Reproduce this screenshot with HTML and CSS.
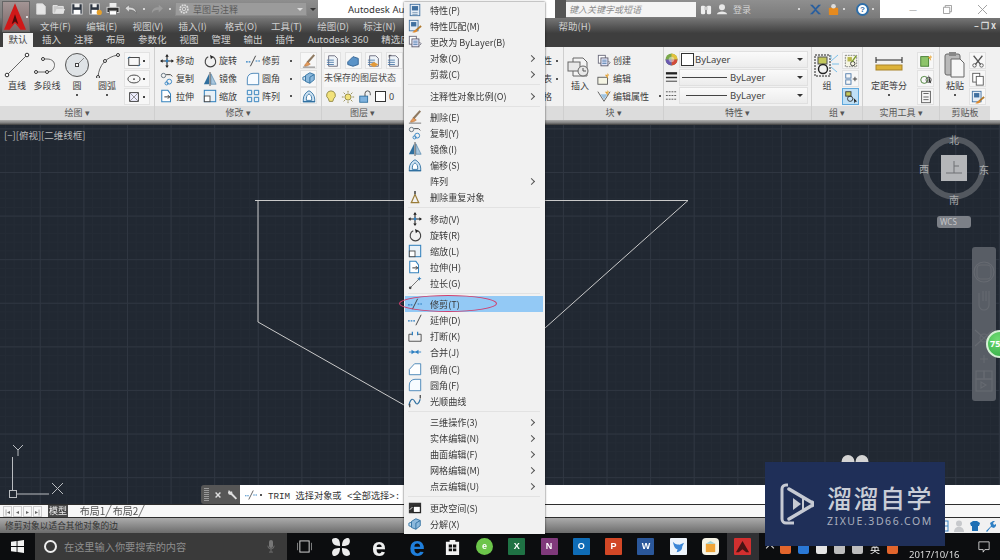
FILE: index.html
```html
<!DOCTYPE html>
<html lang="zh-CN">
<head>
<meta charset="utf-8">
<title>AutoCAD 修剪</title>
<link rel="stylesheet" href="styles.css">
</head>
<body>
<svg class="sprite" xmlns="http://www.w3.org/2000/svg">
  <symbol id="s-props" viewBox="0 0 16 16"><rect x="2.5" y="1.5" width="11" height="13" fill="#e4ecf5" stroke="#3f6f9f"/><rect x="4.5" y="3.5" width="7" height="5" fill="#3f6f9f"/><path d="M5 11h6M5 13h6" stroke="#7a97b5"/></symbol>
  <symbol id="s-match" viewBox="0 0 16 16"><rect x="1.5" y="1.5" width="10" height="12" fill="#e4ecf5" stroke="#3f6f9f"/><rect x="3.5" y="3.5" width="6" height="5" fill="#3f6f9f"/><path d="M15 8 9 13" stroke="#b0782c" stroke-width="2"/><path d="M7 13l3-1 1 2-3 1.5H5z" fill="#e08a2c"/></symbol>
  <symbol id="s-bylayer" viewBox="0 0 16 16"><rect x="1.5" y="1.5" width="8" height="9" fill="#fff" stroke="#667"/><rect x="4.5" y="4.5" width="8" height="9" fill="#eef" stroke="#556"/><path d="M6 7h5M6 9h5M6 11h5" stroke="#4a78a8"/><path d="M13 8l2 2-2 2" fill="none" stroke="#667"/></symbol>
  <symbol id="s-erase" viewBox="0 0 16 16"><path d="M14 1 6 10" stroke="#8f7a62" stroke-width="2.4"/><path d="M3 13c1-2 2-3 3.500-4l3 2.500C7 13.500 5 14 3 14z" fill="#e39a5a" stroke="#a8622a" stroke-width=".6"/><path d="M1 15h14" stroke="#6d6d6d"/></symbol>
  <symbol id="s-copy" viewBox="0 0 16 16"><circle cx="4" cy="4" r="2.500" fill="none" stroke="#5a6a78"/><path d="M7 3h5l2 2" fill="none" stroke="#333"/><circle cx="10.500" cy="11" r="2.800" fill="none" stroke="#2d7fc1"/><circle cx="7.500" cy="13" r="1.800" fill="none" stroke="#2d7fc1"/></symbol>
  <symbol id="s-mirror" viewBox="0 0 16 16"><path d="M7 2 1 14h6z" fill="#2f6f9e"/><path d="M9 2l6 12H9z" fill="#a9c6dd" stroke="#2f6f9e" stroke-width=".6"/><path d="M8 0v16" stroke="#444"/></symbol>
  <symbol id="s-offset" viewBox="0 0 16 16"><path d="M1.500 14.500v-3c0-4 3-8 6.500-9.500 3.500 1.500 6.500 5.500 6.500 9.500v3z" fill="#cfe3f3" stroke="#2d6e9f"/><path d="M5 13v-2.500C5 8 6.500 6.500 8 5.500c1.500 1 3 2.500 3 5V13z" fill="#fff" stroke="#2d6e9f"/><path d="M1 14.500h14" stroke="#2d6e9f" stroke-width="1.400"/></symbol>
  <symbol id="s-dedupe" viewBox="0 0 16 16"><path d="M8 1v4" stroke="#555" stroke-width="2"/><path d="M8 5 4 14M8 5l4 9M3 14.500h10" fill="none" stroke="#9a7c38" stroke-width="1.400"/></symbol>
  <symbol id="s-move" viewBox="0 0 16 16"><path d="M8 2v12M2 8h12" stroke="#222" stroke-width="1.200"/><path d="M8 0l2 3H6zM8 16l2-3H6zM0 8l3-2v4zM16 8l-3-2v4z" fill="#222"/><circle cx="8" cy="8" r="1.600" fill="#2d7fc1"/></symbol>
  <symbol id="s-rotate" viewBox="0 0 16 16"><path d="M6 3.200a6 6 0 1 0 5 0" fill="none" stroke="#444" stroke-width="1.300"/><path d="M8 1 12 3l-3 3z" fill="#222"/></symbol>
  <symbol id="s-scale" viewBox="0 0 16 16"><rect x="1.500" y="1.500" width="13" height="13" fill="#e8f1f8" stroke="#3582bd" stroke-width="1.200"/><rect x="1.500" y="8" width="6.500" height="6.500" fill="#fff" stroke="#444"/></symbol>
  <symbol id="s-stretch" viewBox="0 0 16 16"><path d="M2 1.500h7l3 4v9H2z" fill="#fff" stroke="#3582bd" stroke-width="1.200"/><path d="M5 9h6M9 7l2 2-2 2" fill="none" stroke="#222"/></symbol>
  <symbol id="s-lengthen" viewBox="0 0 16 16"><path d="M2 14 13 3" stroke="#666"/><circle cx="2.500" cy="13.500" r="1.500" fill="#444"/><path d="M13 1v4M11 3h4" stroke="#2d7fc1"/></symbol>
  <symbol id="s-trim" viewBox="0 0 16 16"><path d="M0 9h5M11 8h5" stroke="#2d7fc1" stroke-width="1.200" stroke-dasharray="2 1"/><path d="M5 14 11 2" stroke="#333"/></symbol>
  <symbol id="s-extend" viewBox="0 0 16 16"><path d="M0 9h9" stroke="#2d7fc1" stroke-width="1.200" stroke-dasharray="2 1"/><path d="M9 14 15 2" stroke="#333"/></symbol>
  <symbol id="s-break" viewBox="0 0 16 16"><path d="M1 6v8h14V6" fill="none" stroke="#444"/><path d="M1 6h4M11 6h4" stroke="#444"/><path d="M5 3v4M11 3v4" stroke="#2d7fc1" stroke-width="1.400"/></symbol>
  <symbol id="s-join" viewBox="0 0 16 16"><path d="M1 8h14" stroke="#2d7fc1"/><path d="M8 8 4 5.500v5zM8 8l4-2.500v5z" fill="#2d7fc1"/></symbol>
  <symbol id="s-chamfer" viewBox="0 0 16 16"><path d="M1.500 14.500v-6l6-6.500h7v12.500z" fill="#fff" stroke="#3f7fb3"/></symbol>
  <symbol id="s-fillet" viewBox="0 0 16 16"><path d="M1.500 14.500V8c0-4 3-6.500 6.500-6.500h6.500v13z" fill="#f7fbff" stroke="#3f7fb3"/></symbol>
  <symbol id="s-spline" viewBox="0 0 16 16"><path d="M1 13c2-9 5-8 7-4s4 3 6-3" fill="none" stroke="#2d6e9f" stroke-width="1.300"/><path d="M2 15v-4M14 1v4" stroke="#444" stroke-width="1.400"/></symbol>
  <symbol id="s-space" viewBox="0 0 16 16"><rect x="1" y="2" width="14" height="12" fill="#333"/><rect x="6" y="6" width="8" height="7" fill="#fff" stroke="#111"/><path d="M2 10l3-3" stroke="#fff"/></symbol>
  <symbol id="s-explode" viewBox="0 0 16 16"><path d="M4 5l5-3 5 2v6l-5 4-5-2z" fill="#8bb8dc" stroke="#2d6e9f"/><path d="M1 7l3-1v5L1 10zM9 7l5-3M9 7v7" stroke="#2d6e9f" fill="#cfe3f3"/></symbol>
  <symbol id="s-layer" viewBox="0 0 16 16"><path d="M3 2h7l3 3v9H3z" fill="#eef3f8" stroke="#667"/><path d="M1 7h8M1 9.500h8M1 12h8" stroke="#4a78a8"/></symbol>
  <symbol id="s-group" viewBox="0 0 16 16"><rect x="1.500" y="1.500" width="13" height="13" fill="#f5f5e4" stroke="#777" stroke-dasharray="2 1"/><rect x="4" y="3.500" width="5" height="5" fill="#b9b84e"/><circle cx="10" cy="11" r="2.500" fill="none" stroke="#333"/></symbol>
</svg>

<div class="app">
  <header class="qat">
    <div class="qat-tools">
      <svg class="qi" viewBox="0 0 16 14"><path d="M3 1h7l3 3v9H3z" fill="#e6e6e6" stroke="#ddd"/></svg>
      <svg class="qi" viewBox="0 0 16 14"><path d="M1 3h5l1 1h6v8H1z" fill="#c9c9c9" stroke="#eee"/><path d="M3 12l2-5h10l-2 5z" fill="#e2e2e2"/></svg>
      <svg class="qi" viewBox="0 0 16 14"><rect x="2" y="1" width="12" height="12" fill="#2c3440" stroke="#ddd"/><rect x="5" y="1" width="6" height="4" fill="#eee"/><rect x="4" y="8" width="8" height="5" fill="#fff"/></svg>
      <svg class="qi" viewBox="0 0 16 14"><rect x="2" y="1" width="11" height="12" fill="#2c3440" stroke="#ddd"/><rect x="5" y="1" width="5" height="4" fill="#eee"/><rect x="4" y="8" width="7" height="5" fill="#fff"/><circle cx="13" cy="11" r="3" fill="#e6a12c"/></svg>
      <svg class="qi" viewBox="0 0 16 14"><rect x="4" y="0" width="8" height="5" fill="#eee"/><rect x="1" y="5" width="14" height="6" fill="#333" stroke="#ddd"/><rect x="4" y="9" width="8" height="5" fill="#fff" stroke="#777"/></svg>
      <svg class="qi" viewBox="0 0 16 14"><path d="M1 6l5-4v3c5 0 8 2 8 7-2-3-4-4-8-4v3z" fill="#d8d8d8" stroke="#555" stroke-width=".5"/></svg>
      <span class="qdot"></span>
      <svg class="qi dim" viewBox="0 0 16 14"><path d="M15 6l-5-4v3C5 5 2 7 2 12c2-3 4-4 8-4v3z" fill="#a5a5a5"/></svg>
      <span class="qdot"></span>
    </div>
    <div class="workspace">
      <svg class="gear" viewBox="0 0 14 14"><circle cx="7" cy="7" r="4.500" fill="none" stroke="#ddd" stroke-width="2" stroke-dasharray="2 1"/><circle cx="7" cy="7" r="2" fill="none" stroke="#ddd"/></svg>
      <span class="ws-name">草图与注释</span>
      <span class="tri"></span>
    </div>
    <span class="ws-more"><span class="tri dark"></span></span>
    <div class="title-white"><span>Autodesk Aut</span></div>
    <div class="search-area">
      <span class="search-arrow"></span>
      <span class="search-input">键入关键字或短语</span>
      <span class="binoc">
        <svg viewBox="0 0 14 13"><rect x="1" y="2" width="5" height="10" rx="1.500" fill="#eee"/><rect x="8" y="2" width="5" height="10" rx="1.500" fill="#eee"/><rect x="5" y="3" width="4" height="4" fill="#ccc"/></svg>
      </span>
      <svg class="user" viewBox="0 0 14 14"><circle cx="7" cy="5" r="3.500" fill="#e8e8e8"/><path d="M1 13c1-4 11-4 12 0z" fill="#e8e8e8"/></svg>
      <span class="login">登录</span>
      <span class="qdot push"></span>
      <svg class="xi" viewBox="0 0 14 14"><path d="M1 2l5 5-5 5h3l3-3.500L10 12h3L8 7l5-5h-3L7 5.500 4 2z" fill="#2a5f9e"/></svg>
      <svg class="xi" viewBox="0 0 14 14"><rect x="2" y="5" width="10" height="8" rx="1" fill="#e58a1f"/><circle cx="7" cy="3.500" r="2.500" fill="#ddd"/></svg>
      <span class="qdot"></span>
      <span class="help">?</span>
      <span class="qdot"></span>
    </div>
    <div class="winctl">
      <span class="wc">—</span>
      <svg class="wc-i" viewBox="0 0 10 10"><path d="M.5 2.500h7v7h-7zM2.500 2.500v-2h7v7h-2" fill="none" stroke="#999"/></svg>
      <svg class="wc-i" viewBox="0 0 10 10"><path d="M0 0l10 10M10 0 0 10" stroke="#999"/></svg>
    </div>
  </header>

  <nav class="menubar">
    <span class="mi">文件(F)</span><span class="mi">编辑(E)</span><span class="mi">视图(V)</span><span class="mi">插入(I)</span><span class="mi">格式(O)</span><span class="mi">工具(T)</span><span class="mi">绘图(D)</span><span class="mi">标注(N)</span>
    <span class="mi mi-help">帮助(H)</span>
    <span class="doc-ctl">– ❐ x</span>
  </nav>

  <nav class="tabs">
    <span class="tab active">默认</span><span class="tab">插入</span><span class="tab">注释</span><span class="tab">布局</span><span class="tab">参数化</span><span class="tab">视图</span><span class="tab">管理</span><span class="tab">输出</span><span class="tab">插件</span><span class="tab latin">Autodesk 360</span><span class="tab">精选应</span>
  </nav>

  <section class="ribbon">
    <div class="panel p-draw">
      <div class="body">
        <div class="large w30"><svg class="big" viewBox="0 0 26 26"><path d="M3 23 23 3" stroke="#666"/><circle cx="3" cy="23" r="1.800" fill="#fff" stroke="#333"/><circle cx="23" cy="3" r="1.800" fill="#fff" stroke="#333"/></svg><span>直线</span></div>
        <div class="large w30"><svg class="big" viewBox="0 0 26 26"><path d="M2 20h11c9 0 11-13 0-13H9" fill="none" stroke="#666"/><circle cx="2" cy="20" r="1.500" fill="#fff" stroke="#333"/><circle cx="13" cy="20" r="1.500" fill="#fff" stroke="#333"/><circle cx="9" cy="7" r="1.500" fill="#fff" stroke="#333"/></svg><span>多段线</span></div>
        <div class="large w30"><svg class="big" viewBox="0 0 26 26"><circle cx="13" cy="13" r="11.500" fill="#dfe3e6" stroke="#555"/><path d="M13 13 20 6" stroke="#888"/><rect x="11.500" y="11.500" width="3" height="3" fill="#fff" stroke="#444"/></svg><span>圆</span><i class="down"></i></div>
        <div class="large w30"><svg class="big" viewBox="0 0 26 26"><path d="M4 25C5 13 12 5 24 3" fill="none" stroke="#666"/><circle cx="4" cy="25" r="1.500" fill="#fff" stroke="#333"/><circle cx="11" cy="9" r="1.500" fill="#fff" stroke="#333"/><circle cx="24" cy="3" r="1.500" fill="#fff" stroke="#333"/></svg><span>圆弧</span><i class="down"></i></div>
        <div class="stack drop">
          <span class="sq"><svg viewBox="0 0 16 16"><rect x="2" y="4" width="12" height="9" fill="none" stroke="#333"/><path d="M1 5l2-2M13 14l2-2" stroke="#2d7fc1"/></svg><i></i></span>
          <span class="sq"><svg viewBox="0 0 16 16"><ellipse cx="8" cy="8" rx="7" ry="4.500" fill="none" stroke="#333"/><circle cx="8" cy="8" r="1" fill="#333"/></svg><i></i></span>
          <span class="sq"><svg viewBox="0 0 16 16"><rect x="3" y="3" width="10" height="10" fill="#eef" stroke="#333"/><path d="M3 3l10 10M13 3 3 13" stroke="#888"/></svg><i></i></span>
        </div>
      </div>
      <div class="ptitle">绘图 ▾</div>
    </div>

    <div class="panel p-modify">
      <div class="body modify-grid">
        <div class="tool"><svg class="ic"><use href="#s-move"/></svg>移动</div>
        <div class="tool"><svg class="ic"><use href="#s-rotate"/></svg>旋转</div>
        <div class="tool"><svg class="ic"><use href="#s-trim"/></svg>修剪<i class="dot"></i></div>
        <span class="sq plain"><svg viewBox="0 0 16 16"><use href="#s-erase"/></svg></span>
        <div class="tool"><svg class="ic"><use href="#s-copy"/></svg>复制</div>
        <div class="tool"><svg class="ic"><use href="#s-mirror"/></svg>镜像</div>
        <div class="tool"><svg class="ic"><use href="#s-fillet"/></svg>圆角<i class="dot"></i></div>
        <span class="sq plain"><svg viewBox="0 0 16 16"><use href="#s-explode"/></svg></span>
        <div class="tool"><svg class="ic"><use href="#s-stretch"/></svg>拉伸</div>
        <div class="tool"><svg class="ic"><use href="#s-scale"/></svg>缩放</div>
        <div class="tool"><svg class="ic" viewBox="0 0 16 16"><path d="M1.500 1.500h5v5h-5zM9.500 1.500h5v5h-5zM1.500 9.500h5v5h-5zM9.500 9.500h5v5h-5z" fill="#e8f1f8" stroke="#3582bd" stroke-width="1.100"/></svg>阵列<i class="dot"></i></div>
        <span class="sq plain"><svg viewBox="0 0 16 16"><use href="#s-offset"/></svg></span>
      </div>
      <div class="ptitle">修改 ▾</div>
    </div>

    <div class="panel p-layer">
      <div class="body layer-body">
        <div class="icon-row">
          <span class="sq plain"><svg viewBox="0 0 16 16"><use href="#s-layer"/></svg></span>
          <span class="sq plain"><svg viewBox="0 0 16 16"><path d="M2 9l6-6 6 2v7l-6 2-6-2z" fill="#5b93c7" stroke="#2d5e8f"/></svg></span>
          <span class="sq plain"><svg viewBox="0 0 16 16"><use href="#s-layer"/><path d="M8 9l5 3-5 3-5-3z" fill="#e39a3a"/></svg></span>
          <span class="sq plain"><svg viewBox="0 0 16 16"><path d="M2 1h3v3H2z" fill="#333"/><use href="#s-layer"/></svg></span>
        </div>
        <div class="layer-state">未保存的图层状态</div>
        <div class="icon-row tight">
          <svg class="ic" viewBox="0 0 16 16"><path d="M8 1a5 5 0 0 1 3 9l-1 3H6l-1-3a5 5 0 0 1 3-9z" fill="#f2e27a" stroke="#8c8240"/></svg>
          <svg class="ic" viewBox="0 0 16 16"><circle cx="8" cy="8" r="3.500" fill="#f2e27a" stroke="#8c8240"/><path d="M8 1v2M8 13v2M1 8h2M13 8h2M3 3l1.500 1.500M13 3l-1.500 1.500M3 13l1.500-1.500M13 13l-1.500-1.500" stroke="#8c8240"/></svg>
          <svg class="ic" viewBox="0 0 16 16"><rect x="2" y="7" width="9" height="7" fill="#7fb2de" stroke="#2d6e9f"/><path d="M8 7V4a3 3 0 0 1 6 0v2" fill="none" stroke="#444"/></svg>
          <span class="swatch"></span><span class="zero">0</span>
        </div>
      </div>
      <div class="ptitle">图层 ▾</div>
    </div>

    <div class="panel p-annot">
      <div class="body annot-body">
        <div class="annot-row">性<i class="dot"></i></div>
        <div class="annot-row">表<i class="dot"></i></div>
        <div class="annot-row">格<i class="dot blank"></i></div>
      </div>
      <div class="ptitle"></div>
    </div>

    <div class="panel p-block">
      <div class="body">
        <div class="large w30"><svg class="big" viewBox="0 0 26 26"><path d="M6 6h10l4 4v14H6z" fill="#f4f4f4" stroke="#666"/><rect x="1" y="10" width="12" height="9" fill="#e8e8e8" stroke="#666"/><circle cx="16" cy="19" r="5" fill="#e8e8e8" stroke="#666"/><path d="M16 16v3h3" fill="none" stroke="#555"/></svg><span>插入</span></div>
        <div class="col">
          <div class="tool"><svg class="ic"><use href="#s-bylayer"/></svg>创建</div>
          <div class="tool"><svg class="ic" viewBox="0 0 16 16"><rect x="1" y="6" width="11" height="8" fill="#f4f4e4" stroke="#555"/><path d="M12 1l2 3h-2l1 4-4-5h3z" fill="#e6a12c"/></svg>编辑</div>
          <div class="tool"><svg class="ic" viewBox="0 0 16 16"><path d="M1 3l7 11 7-11" fill="none" stroke="#555"/><path d="M4 6h8L8 12z" fill="#9cc2e0"/><path d="M12 1l2 3h-2l1 4-4-5h3z" fill="#e6a12c"/></svg>编辑属性<i class="dot"></i></div>
        </div>
      </div>
      <div class="ptitle">块 ▾</div>
    </div>

    <div class="panel p-prop">
      <div class="body prop-body">
        <div class="prop-row">
          <svg class="ic wheel" viewBox="0 0 14 14"><circle cx="7" cy="7" r="6.500" fill="#7aa84a"/><path d="M7 7V.5A6.500 6.500 0 0 1 13.500 7z" fill="#e2c23c"/><path d="M7 7h6.500A6.500 6.500 0 0 1 7 13.500z" fill="#d24a3a"/><path d="M7 7v6.500A6.500 6.500 0 0 1 .5 7z" fill="#6a5ab0"/><circle cx="7" cy="7" r="3" fill="#e9e9e9" opacity=".5"/></svg>
          <div class="combo"><span class="swatch"></span><span class="c-name">ByLayer</span><span class="tri dark"></span></div>
        </div>
        <div class="prop-row">
          <svg class="ic" viewBox="0 0 14 14"><path d="M1 2.500h12" stroke="#222" stroke-width="2.500"/><path d="M1 7h12" stroke="#222" stroke-width="1.600"/><path d="M1 11h12" stroke="#333"/></svg>
          <div class="combo lined"><span class="c-line"></span><span class="c-name">ByLayer</span><span class="tri dark"></span></div>
        </div>
        <div class="prop-row">
          <svg class="ic" viewBox="0 0 14 14"><path d="M1 3h12M1 7h12M1 11h12" stroke="#555" stroke-dasharray="2 1"/></svg>
          <div class="combo lined inset"><span class="c-line"></span><span class="c-name">ByLayer</span><span class="tri dark"></span></div>
        </div>
      </div>
      <div class="ptitle">特性 ▾</div>
    </div>

    <div class="panel p-group">
      <div class="body">
        <div class="large w30"><svg class="big" viewBox="0 0 26 26"><rect x="1" y="3" width="15" height="21" fill="none" stroke="#222" stroke-dasharray="2 1"/><rect x="4" y="5" width="9" height="7" fill="#c4c85c" stroke="#555"/><circle cx="9" cy="17" r="4.500" fill="none" stroke="#222" stroke-width="1.400"/><path d="M17 9l7-6M18 12h7M17 15l6 5M17 3v4" stroke="#7ac0ea"/></svg><span>组</span></div>
        <div class="stack">
          <span class="sq plain"><svg viewBox="0 0 16 16"><use href="#s-group"/><path d="M9 9l5-7" stroke="#7a9a2c" stroke-width="1.500"/></svg></span>
          <span class="sq plain"><svg viewBox="0 0 16 16"><rect x="2" y="2" width="6" height="5" fill="none" stroke="#4a78a8"/><rect x="2" y="9" width="6" height="5" fill="none" stroke="#4a78a8"/><path d="M10 8h5M12.500 5.500v5" stroke="#333"/></svg></span>
          <span class="sq active"><svg viewBox="0 0 16 16"><rect x="2" y="2" width="6" height="5" fill="#c4c85c" stroke="#333"/><circle cx="7" cy="10" r="3" fill="none" stroke="#333"/><path d="M11 9l4 4-2 .5-1 2z" fill="#222"/></svg></span>
        </div>
      </div>
      <div class="ptitle">组 ▾</div>
    </div>

    <div class="panel p-util">
      <div class="body">
        <div class="large w52"><svg class="big wide" viewBox="0 0 30 26"><path d="M2 8h26" stroke="#222"/><path d="M2 5v6M28 5v6" stroke="#222"/><rect x="2" y="13" width="26" height="5" fill="#dcb23a" stroke="#a9832a"/></svg><span>定距等分</span><i class="down"></i></div>
        <div class="stack">
          <span class="sq plain"><svg viewBox="0 0 16 16"><rect x="2" y="3" width="9" height="11" fill="#8dc46a" stroke="#3f7a2c"/><path d="M13 1l2 3h-2l1 4-4-5h3z" fill="#e6a12c"/></svg></span>
          <span class="sq plain"><svg viewBox="0 0 16 16"><circle cx="6" cy="9" r="4" fill="none" stroke="#3f7a2c"/><circle cx="11" cy="9" r="3" fill="none" stroke="#555"/><path d="M11 3l3 10-3-2z" fill="#333"/></svg></span>
          <span class="sq plain"><svg viewBox="0 0 16 16"><rect x="3" y="1.500" width="10" height="13" fill="#f6f6f6" stroke="#555"/><path d="M5 4h6M5 8h6M5 11h6" stroke="#555"/></svg></span>
        </div>
      </div>
      <div class="ptitle">实用工具 ▾</div>
    </div>

    <div class="panel p-clip">
      <div class="body">
        <div class="large w30"><svg class="big" viewBox="0 0 26 26"><rect x="3" y="2" width="15" height="21" rx="2" fill="#b9b9b9" stroke="#666"/><rect x="7" y="0" width="7" height="4" fill="#888"/><path d="M9 7h9l4 4v14H9z" fill="#f6f6f6" stroke="#666"/></svg><span>粘贴</span><i class="down"></i></div>
        <div class="stack">
          <span class="sq plain"><svg viewBox="0 0 16 16"><path d="M3 2l8 10M13 2 5 12" stroke="#555" stroke-width="1.400"/><circle cx="4" cy="13" r="2" fill="none" stroke="#555"/><circle cx="12" cy="13" r="2" fill="none" stroke="#555"/></svg></span>
          <span class="sq plain"><svg viewBox="0 0 16 16"><rect x="2" y="1.500" width="8" height="10" fill="#fff" stroke="#555"/><rect x="6" y="5" width="8" height="10" fill="#fff" stroke="#555"/></svg></span>
          <span class="sq plain"><svg viewBox="0 0 16 16"><use href="#s-match"/></svg></span>
        </div>
      </div>
      <div class="ptitle">剪贴板</div>
    </div>
  </section>
  <div class="ribbon-edge"></div>

  <main class="canvas">
    <div class="grid"></div>
    <span class="view-label">[−][俯视][二维线框]</span>

    <svg class="drawing" viewBox="0 125 1000 379" xmlns="http://www.w3.org/2000/svg">
      <g fill="none" stroke="#c9c9c9" stroke-width="1">
        <path d="M255 200.500H688L545 328"/>
        <path d="M258 200.500V322L404 405"/>
      </g>
      <g fill="none" stroke="#b9bcc0" stroke-width="1">
        <path d="M12.500 457V491M17 494H49"/>
        <rect x="9.500" y="490.500" width="7" height="7"/>
        <path d="M13 445l5 5M23 445l-5 5v6M52 483l11 11M63 483 52 494"/>
      </g>
      <ellipse cx="848" cy="462" rx="6.500" ry="7" fill="#d4d4d4"/>
      <ellipse cx="862" cy="462" rx="6.500" ry="7" fill="#d4d4d4"/>
      <circle cx="954" cy="168" r="28.500" fill="none" stroke="#53585f" stroke-width="6"/>
      <rect x="941" y="155" width="26" height="26" fill="#b4b6b9"/>
      <path d="M946 173h16M954 161v12M954 166h5" stroke="#6f7174" fill="none"/>
    </svg>
    <div class="compass north">北</div>
    <div class="compass south">南</div>
    <div class="compass west">西</div>
    <div class="compass east">东</div>
    <div class="wcs">WCS</div>

    <div class="navbar">
      <svg viewBox="0 0 24 154" xmlns="http://www.w3.org/2000/svg">
        <g fill="none" stroke="#666a71" stroke-width="1.100">
          <rect x="5" y="18" width="14" height="14" rx="4"/>
          <circle cx="12" cy="25" r="10"/>
          <path d="M7 46v12a5 5 0 0 0 10 0V44M11 44v10M14 44v10M3 83l18 16M21 83 3 99"/>
          <circle cx="12" cy="91" r="4"/>
          <path d="M8 112h8M12 108v8"/>
          <rect x="4" y="124" width="8" height="8"/>
          <rect x="12" y="124" width="8" height="8"/>
          <rect x="4" y="132" width="16" height="12"/>
          <path d="M9 135l5 3-5 3z"/>
        </g>
      </svg>
    </div>
    <div class="badge">75</div>

    <div class="cmdbar">
      <div class="cmd-handle">
        <span class="grip"></span>
        <svg class="cmd-i" viewBox="0 0 10 10"><path d="M2 2l6 6M8 2 2 8" stroke="#ddd" stroke-width="1.800"/></svg>
        <svg class="cmd-i wrench" viewBox="0 0 12 12"><path d="M2 1l2 2 1.500-.5L6 5l5 5-1.500 1.500-5-5L2 6 1 4z" fill="#ddd"/></svg>
      </div>
      <div class="cmd-text"><svg class="cmd-trim"><use href="#s-trim"/></svg><i class="dot"></i><span>TRIM 选择对象或 &lt;全部选择&gt;:</span></div>
    </div>
  </main>

  <div class="rule"></div>
  <div class="layouts">
    <span class="nav-btns"><i>|◂</i><i>◂</i><i>▸</i><i>▸|</i></span>
    <span class="ltab cur">模型</span><span class="ltab">布局1</span><span class="ltab">布局2</span>
  </div>
  <div class="rule"></div>
  <div class="status">
    <span class="status-text">修剪对象以适合其他对象的边</span>
    <div class="status-tray">
      <svg viewBox="0 0 12 12"><rect x="1" y="1" width="10" height="10" fill="none" stroke="#3c86c6"/><path d="M6 1v10M1 6h10" stroke="#3c86c6"/></svg>
      <svg viewBox="0 0 12 12"><circle cx="6" cy="3.500" r="3" fill="#c7c9cc"/><path d="M1 12c0-7 10-7 10 0z" fill="#c7c9cc"/></svg>
      <svg viewBox="0 0 12 12"><path d="M1 3l3-2h4l3 2-1 3H9v5H3V6H2z" fill="#1f70b4"/></svg>
      <svg viewBox="0 0 12 12"><path d="M1 11l5-5-1-3 3-2 2 0-2 2 1 2 2-1 0 2-2 2-3-1-4 5z" fill="#2f80c4"/></svg>
    </div>
  </div>

  <footer class="taskbar">
    <div class="start"><svg viewBox="0 0 14 14"><path d="M0 2l6-1v5.500H0zM7 1l7-1v6.500H7zM0 7.500h6V13l-6-1zM7 7.500h7V14l-7-1z" fill="#f2f2f2"/></svg></div>
    <div class="tb-search">
      <span class="cortana"></span>
      <span class="tb-text">在这里输入你要搜索的内容</span>
      <svg class="mic" viewBox="0 0 10 16"><rect x="2.500" y="0" width="5" height="10" rx="2.500" fill="#777"/><path d="M1 7a4 4 0 0 0 8 0M5 11v4M2.500 15h5" fill="none" stroke="#777"/></svg>
    </div>
    <div class="slot s34"><svg class="t16" viewBox="0 0 16 14"><rect x="3" y="1" width="10" height="12" fill="none" stroke="#ddd"/><path d="M0 3v8M16 3v8" stroke="#ddd"/></svg></div>
    <div class="slot s39"><svg class="t20" viewBox="0 0 20 20"><g fill="#ececec"><path d="M9 9C3 9 1 6 1 3c0-2 5-3 7 0 1 2 1 4 1 6zM11 9c0-6 3-8 6-8 2 0 3 5 0 7-2 1-4 1-6 1zM11 11c6 0 8 3 8 6 0 2-5 3-7 0-1-2-1-4-1-6zM9 11c0 6-3 8-6 8-2 0-3-5 0-7 2-1 4-1 6-1z"/></g></svg></div>
    <div class="slot s38"><span class="eie">e</span></div>
    <div class="slot s38"><span class="eedge">e</span></div>
    <div class="slot"><svg class="t18" viewBox="0 0 16 18"><path d="M5 4V2h6v2h4v14H1V4z" fill="#f2f2f2"/><path d="M4 7h3.500v3H4zM8.500 7H12v3H8.500zM4 11h3.500v3H4zM8.500 11H12v3H8.500z" fill="#111"/></svg></div>
    <div class="slot"><span class="app-i green">e</span></div>
    <div class="slot"><span class="app-i excel">X</span></div>
    <div class="slot"><span class="app-i one">N</span></div>
    <div class="slot"><span class="app-i outlook">O</span></div>
    <div class="slot"><span class="app-i ppt">P</span></div>
    <div class="slot"><span class="app-i word">W</span></div>
    <div class="slot"><span class="app-i bird"><svg viewBox="0 0 16 16"><path d="M2 3c3 3 5 3 7 3l5-2-2 4c0 4-3 6-6 6l1-3c-3 0-4-4-5-8z" fill="#3c86d6"/></svg></span></div>
    <div class="slot"><span class="app-i box"><svg viewBox="0 0 16 16"><rect x="3" y="5" width="10" height="9" fill="#f0a437"/><path d="M3 5l5-3 5 3z" fill="#9cd2d8"/></svg></span></div>
    <div class="slot current"><span class="app-i acad"><svg viewBox="0 0 16 16"><path d="M8 2 1 14h3l4-3 4 3h3z" fill="#491414"/></svg></span></div>
    <div class="tray">
      <span class="caret"></span>
      <i class="t-dot orange"></i><i class="t-dot blue"></i><i class="t-dot white"></i><i class="t-dot grey"></i><i class="t-dot grey"></i>
      <span class="ying">英</span>
      <i class="t-dot orange big-dot"></i>
      <span class="clock">2017/10/16</span>
      <svg class="notif" viewBox="0 0 14 14"><path d="M1 1h12v9H8l-2 3v-3H1z" fill="none" stroke="#ddd"/></svg>
    </div>
  </footer>

  <div class="ctxmenu">
    <div class="ci"><svg class="ci-i"><use href="#s-props"/></svg><span>特性(P)</span></div>
    <div class="ci"><svg class="ci-i"><use href="#s-match"/></svg><span>特性匹配(M)</span></div>
    <div class="ci"><svg class="ci-i"><use href="#s-bylayer"/></svg><span>更改为 ByLayer(B)</span></div>
    <div class="ci sub"><span class="ci-i"></span><span>对象(O)</span></div>
    <div class="ci sub"><span class="ci-i"></span><span>剪裁(C)</span></div>
    <div class="sep"></div>
    <div class="ci sub"><span class="ci-i"></span><span>注释性对象比例(O)</span></div>
    <div class="sep"></div>
    <div class="ci"><svg class="ci-i"><use href="#s-erase"/></svg><span>删除(E)</span></div>
    <div class="ci"><svg class="ci-i"><use href="#s-copy"/></svg><span>复制(Y)</span></div>
    <div class="ci"><svg class="ci-i"><use href="#s-mirror"/></svg><span>镜像(I)</span></div>
    <div class="ci"><svg class="ci-i"><use href="#s-offset"/></svg><span>偏移(S)</span></div>
    <div class="ci sub"><span class="ci-i"></span><span>阵列</span></div>
    <div class="ci"><svg class="ci-i"><use href="#s-dedupe"/></svg><span>删除重复对象</span></div>
    <div class="sep"></div>
    <div class="ci"><svg class="ci-i"><use href="#s-move"/></svg><span>移动(V)</span></div>
    <div class="ci"><svg class="ci-i"><use href="#s-rotate"/></svg><span>旋转(R)</span></div>
    <div class="ci"><svg class="ci-i"><use href="#s-scale"/></svg><span>缩放(L)</span></div>
    <div class="ci"><svg class="ci-i"><use href="#s-stretch"/></svg><span>拉伸(H)</span></div>
    <div class="ci"><svg class="ci-i"><use href="#s-lengthen"/></svg><span>拉长(G)</span></div>
    <div class="sep"></div>
    <div class="ci hot"><svg class="ci-i"><use href="#s-trim"/></svg><span>修剪(T)</span></div>
    <div class="ci"><svg class="ci-i"><use href="#s-extend"/></svg><span>延伸(D)</span></div>
    <div class="ci"><svg class="ci-i"><use href="#s-break"/></svg><span>打断(K)</span></div>
    <div class="ci"><svg class="ci-i"><use href="#s-join"/></svg><span>合并(J)</span></div>
    <div class="ci"><svg class="ci-i"><use href="#s-chamfer"/></svg><span>倒角(C)</span></div>
    <div class="ci"><svg class="ci-i"><use href="#s-fillet"/></svg><span>圆角(F)</span></div>
    <div class="ci"><svg class="ci-i"><use href="#s-spline"/></svg><span>光顺曲线</span></div>
    <div class="sep"></div>
    <div class="ci sub"><span class="ci-i"></span><span>三维操作(3)</span></div>
    <div class="ci sub"><span class="ci-i"></span><span>实体编辑(N)</span></div>
    <div class="ci sub"><span class="ci-i"></span><span>曲面编辑(F)</span></div>
    <div class="ci sub"><span class="ci-i"></span><span>网格编辑(M)</span></div>
    <div class="ci sub"><span class="ci-i"></span><span>点云编辑(U)</span></div>
    <div class="sep"></div>
    <div class="ci"><svg class="ci-i"><use href="#s-space"/></svg><span>更改空间(S)</span></div>
    <div class="ci"><svg class="ci-i"><use href="#s-explode"/></svg><span>分解(X)</span></div>
  </div>
  <div class="ring"></div>

  <div class="appbtn"><svg viewBox="0 0 20 24"><path d="M10 0 0 24h5l5-6 5 6h5z" fill="#d01818"/><path d="M10 10 7 19l3-2.500L13 19z" fill="#4a0c0c"/></svg><i></i></div>

  <aside class="watermark">
    <svg class="wm-logo" viewBox="0 0 34 44" xmlns="http://www.w3.org/2000/svg">
      <path d="M8 3H6a4 4 0 0 0-4 4v30a4 4 0 0 0 4 4h8" fill="none" stroke="#c6cad3" stroke-width="3"/>
      <path d="M9 7 31 20a2 2 0 0 1 0 4L9 37" fill="none" stroke="#c6cad3" stroke-width="3.500" stroke-linecap="round"/>
      <path d="M13 16l8 6-8 6z" fill="#c6cad3"/>
      <path d="M23 16v12" stroke="#c6cad3" stroke-width="2"/>
    </svg>
    <div class="wm-text">
      <div class="wm-cn">溜溜自学</div>
      <div class="wm-en">ZIXUE.3D66.COM</div>
    </div>
  </aside>
</div>
</body>
</html>
```

FILE: styles.css
```css
* { box-sizing: border-box; }
html, body { margin: 0; padding: 0; background: #222; }
body { width: 1000px; height: 560px; overflow: hidden; font-family: "Noto Sans", "Noto Sans CJK SC", sans-serif; }
.sprite { display: none; }
i { font-style: normal; }

.app { position: relative; width: 1000px; height: 560px; display: flex; flex-direction: column; overflow: hidden; font-family: "Noto Sans CJK SC", "Noto Sans", sans-serif; font-size: 9px; color: #3c3c3c; filter: blur(.45px); }

/* quick access bar */
.qat { height: 18px; display: flex; align-items: center; background: linear-gradient(#8e8e8e, #7b7b7b); flex: none; }
.qat-tools { width: 175px; padding-left: 34px; display: flex; align-items: center; gap: 4px; flex: none; }
.qi { width: 14px; height: 12px; flex: none; }
.qi.dim { opacity: .7; }
.qdot { width: 2px; height: 2px; background: #d5d5d5; flex: none; margin: 0 3px; }
.qat-tools .qdot { margin: 0 1px; }
.workspace { width: 132px; height: 14px; background: #9b9b9b; border: 1px solid #8a8a8a; display: flex; align-items: center; gap: 3px; padding: 0 3px 0 2px; flex: none; }
.gear { width: 12px; height: 12px; }
.ws-name { color: #5c5c5c; flex: 1; }
.tri { width: 0; height: 0; border-left: 3px solid transparent; border-right: 3px solid transparent; border-top: 3px solid #ddd; flex: none; }
.tri.dark { border-top-color: #333; }
.ws-more { width: 11px; height: 14px; display: flex; align-items: center; justify-content: center; flex: none; }
.title-white { width: 237px; height: 18px; background: #fff; padding-left: 30px; display: flex; align-items: center; font-family: "Noto Sans", sans-serif; font-size: 9.500px; color: #333; flex: none; white-space: nowrap; overflow: hidden; }
.search-area { width: 325px; height: 18px; display: flex; align-items: center; background: linear-gradient(#8f8f8f, #7a7a7a); flex: none; padding-right: 3px; }
.search-arrow { width: 11px; height: 18px; background: #555; flex: none; }
.search-input { width: 130px; height: 15px; background: #f4f4f4; color: #8a8a8a; font-style: italic; padding-left: 3px; line-height: 15px; flex: none; }
.binoc { margin-left: 4px; width: 12px; height: 11px; display: flex; flex: none; }
.binoc svg { width: 12px; height: 11px; }
.user { width: 12px; height: 12px; margin-left: 4px; flex: none; }
.login { color: #d2d2d2; margin-left: 5px; }
.push { margin-left: auto; margin-right: 4px; }
.xi { width: 13px; height: 13px; margin-left: 5px; flex: none; }
.help { width: 13px; height: 13px; border-radius: 50%; background: #fff; border: 2px solid #2f6ea8; color: #2f6ea8; font: 700 8px/9px "Liberation Sans", sans-serif; text-align: center; margin-left: 8px; flex: none; }
.winctl { width: 120px; height: 18px; background: #fff; display: flex; align-items: center; justify-content: flex-end; gap: 26px; padding-right: 13px; flex: none; }
.wc { color: #999; font-size: 9px; }
.wc-i { width: 9px; height: 9px; }

/* menu bar */
.menubar { height: 15px; display: flex; align-items: center; background: linear-gradient(#767676, #3f3f3f); padding-left: 40px; color: #cfcfcf; flex: none; font-size: 9.500px; }
.mi { width: 46.200px; flex: none; white-space: nowrap; }
.mi-help { margin-left: 149px; }
.doc-ctl { margin-left: auto; padding-right: 4px; font-size: 9px; color: #ddd; font-weight: 700; }

/* ribbon tabs */
.tabs { height: 14px; background: #3e3e3e; display: flex; align-items: flex-end; padding-left: 3px; gap: 13px; color: #d0d0d0; flex: none; font-size: 9.500px; overflow: hidden; }
.tab { height: 14px; line-height: 13px; white-space: nowrap; }
.tab.active { width: 30px; background: #f0f0f0; color: #444; text-align: center; margin-right: -4px; }
.tab.latin { font-family: "Noto Sans", sans-serif; font-size: 9.500px; }

/* ribbon */
.ribbon { height: 73px; display: flex; background: #f1f1f1; flex: none; }
.panel { display: flex; flex-direction: column; border-right: 1px solid #cfcfcf; flex: none; }
.body { height: 59px; display: flex; padding-top: 5px; }
.ptitle { height: 14px; background: #dcdcdc; text-align: center; line-height: 14px; color: #565656; }
.p-draw { width: 155px; }
.p-modify { width: 167px; }
.p-layer { width: 82px; }
.p-annot { width: 160px; }
.p-block { width: 100px; }
.p-prop { width: 148px; }
.p-group { width: 51px; }
.p-util { width: 77px; }
.p-clip { width: 50px; }
.ribbon-edge { height: 5px; background: linear-gradient(#b0b0b0, #7d7d7d 60%, #3a3a3a); flex: none; }
.ribbon > .panel:last-child { border-right: 0; }

.large { display: flex; flex-direction: column; align-items: center; position: relative; flex: none; line-height: 12px; white-space: nowrap; }
.w30 { width: 30px; }
.w52 { width: 52px; }
.big { width: 26px; height: 26px; margin-bottom: 2px; }
.big.wide { width: 30px; }
.down { width: 2px; height: 2px; background: #555; margin-top: 2px; }
.p-draw .body { padding-left: 2px; }
.p-draw .stack { margin-left: 2px; }
.stack { display: flex; flex-direction: column; gap: 1px; flex: none; margin-left: 1px; }
.sq { width: 17px; height: 17px; display: flex; align-items: center; justify-content: center; background: #f7f7f7; border: 1px solid #e2e2e2; flex: none; }
.sq svg { width: 14px; height: 14px; flex: none; }
.drop .sq { width: 26px; justify-content: flex-start; padding-left: 2px; position: relative; }
.drop .sq i { position: absolute; right: 4px; top: 7px; width: 2px; height: 2px; background: #444; }
.sq.active { background: #bfe0f6; border-color: #5fa8dc; }

.tool { display: flex; align-items: center; gap: 2px; height: 17.700px; white-space: nowrap; line-height: 1; }
.ic { width: 14px; height: 14px; flex: none; }
.dot { width: 2px; height: 2px; background: #555; margin-left: 8px; flex: none; }
.dot.blank { background: transparent; }
.modify-grid { display: grid; grid-template-columns: 43px 43px 54px 17px; align-content: start; padding-left: 5px; }
.modify-grid .sq { margin-bottom: .700px; }

.layer-body { flex-direction: column; padding-left: 2px; }
.icon-row { display: flex; gap: 3.500px; height: 17px; align-items: center; }
.icon-row.tight { gap: 3px; height: 19px; }
.layer-state { height: 18px; line-height: 18px; color: #4a4a4a; white-space: nowrap; background: #f6f6f6; margin-right: 2px; }
.swatch { width: 11px; height: 11px; background: #fff; border: 1px solid #333; flex: none; }
.zero { font-family: "Noto Sans", sans-serif; color: #444; }

.annot-body { flex-direction: column; align-items: flex-end; padding-right: 5px; }
.annot-row { height: 17.700px; display: flex; align-items: center; }
.annot-row .dot { margin-left: 4px; }

.p-block .body { padding-left: 1px; }
.col { display: flex; flex-direction: column; margin-left: 2px; }

.prop-body { flex-direction: column; padding-top: 4px; gap: 1px; padding-left: 1px; }
.prop-row { display: flex; align-items: center; gap: 1px; height: 17px; }
.prop-row .ic { width: 13px; height: 13px; }
.wheel { border-radius: 50%; }
.combo { width: 129px; height: 17px; border: 1px solid #e0e0e0; background: linear-gradient(#fafafa, #ececec); display: flex; align-items: center; padding: 0 4px 0 1px; font-family: "Noto Sans", sans-serif; font-size: 9.500px; color: #444; }
.combo .swatch { width: 13px; height: 13px; }
.combo .tri { margin-left: auto; }
.c-name { flex: none; margin-left: 1px; }
.c-line { height: 1px; width: 45px; background: #444; flex: none; }
.combo.lined { padding-left: 2px; }
.combo.lined .c-name { margin-left: 3px; }
.combo.inset { padding-left: 6px; }
.combo.inset .c-line { width: 41px; }

.p-group .stack { margin-left: 0; }
.p-util .stack { margin-left: 2px; }
.p-clip .stack { margin-left: -1px; }

/* drawing area */
.canvas { position: relative; height: 379px; background: #212832; overflow: hidden; flex: none; }
.grid { position: absolute; inset: 0; background-image:
  linear-gradient(to right, #2f3641 1px, transparent 1px),
  linear-gradient(to bottom, #2f3641 1px, transparent 1px),
  linear-gradient(to right, #242b35 1px, transparent 1px),
  linear-gradient(to bottom, #242b35 1px, transparent 1px);
  background-size: 43.600px 43.600px, 43.600px 43.600px, 8.720px 8.720px, 8.720px 8.720px;
  background-position: 39.800px 3.400px, 39.800px 3.400px, 39.800px 3.400px, 39.800px 3.400px; }
.drawing { position: absolute; inset: 0; width: 1000px; height: 379px; }
.view-label { position: absolute; left: 4px; top: 3px; color: #bdbdbd; font-size: 9.500px; white-space: nowrap; }
.compass { position: absolute; color: #a9abad; font-size: 10px; line-height: 12px; width: 12px; text-align: center; }
.north { left: 948px; top: 9px; }
.south { left: 948px; top: 69px; }
.west { left: 918px; top: 38px; }
.east { left: 978px; top: 39px; }
.wcs { position: absolute; left: 937px; top: 91px; width: 34px; height: 12px; background: #7c8087; border-radius: 3px; color: #c4c5c7; font: 8px/12px "Noto Sans", sans-serif; padding-left: 3px; }
.navbar { position: absolute; left: 972px; top: 122px; width: 24px; height: 154px; background: #585d65; border-radius: 3px; }
.navbar svg { display: block; width: 24px; height: 154px; }
.badge { position: absolute; left: 986px; top: 205px; width: 28px; height: 28px; border-radius: 50%; background: radial-gradient(circle at 40% 30%, #6fdc72, #2fa843); border: 2px solid #d6f0d6; color: #fff; font: 700 9px/24px "Noto Sans", sans-serif; padding-left: 2px; }

.cmdbar { position: absolute; left: 201px; right: 0; bottom: 0; height: 19px; display: flex; }
.cmd-handle { width: 39px; background: #565656; display: flex; align-items: center; gap: 5px; padding-left: 3px; flex: none; border-radius: 3px 0 0 3px; }
.grip { width: 5px; height: 14px; background: repeating-linear-gradient(#999 0 1px, #565656 1px 2px); flex: none; }
.cmd-i { width: 8px; height: 8px; flex: none; }
.cmd-i.wrench { width: 11px; height: 11px; }
.cmd-text { flex: 1; background: #fff; display: flex; align-items: center; padding-left: 4px; color: #333; font-family: "Liberation Mono", "Noto Sans CJK SC", monospace; font-size: 9.200px; white-space: nowrap; }
.cmd-trim { width: 14px; height: 12px; flex: none; }
.cmd-text .dot { margin: 0 6px 0 2px; }

.rule { height: 1px; background: #2d2d2d; flex: none; }
.layouts { height: 12px; background: #f7f7f7; display: flex; align-items: center; padding-left: 3px; flex: none; color: #555; }
.nav-btns { display: flex; width: 42px; gap: 1px; flex: none; }
.nav-btns i { width: 9px; height: 11px; border: 1px solid #ccc; font: 6px/9px "DejaVu Sans", sans-serif; text-align: center; color: #666; overflow: hidden; }
.ltab { width: 33px; text-align: center; line-height: 12px; font-size: 10px; position: relative; }
.ltab::after { content: ""; position: absolute; right: 0; top: 0; width: 1px; height: 12px; background: #777; transform: skewX(-25deg); }
.ltab.cur { color: #eee; background: #4a4a4a; width: 20px; margin: 0 8px 0 3px; font-size: 9px; }
.ltab.cur::after { display: none; }
.status { height: 15px; background: linear-gradient(#ababab, #6c6c6c); display: flex; align-items: center; padding-left: 5px; color: #333; flex: none; }
.status-text { white-space: nowrap; font-size: 8.700px; }
.status-tray { position: absolute; right: 0; bottom: 27px; width: 55px; height: 15px; background: #f1f1f1; display: flex; align-items: center; gap: 4px; justify-content: flex-end; padding-right: 3px; }
.status-tray svg { width: 12px; height: 12px; flex: none; }

/* windows taskbar */
.taskbar { height: 27px; background: #0c0d0f; display: flex; align-items: center; flex: none; }
.start { width: 35px; height: 27px; display: flex; align-items: center; justify-content: center; flex: none; }
.start svg { width: 13px; height: 13px; }
.tb-search { width: 252px; height: 27px; background: #3a3a3a; display: flex; align-items: center; padding-left: 9px; flex: none; }
.cortana { width: 13px; height: 13px; border: 2px solid #eee; border-radius: 50%; flex: none; }
.tb-text { color: #8e8e8e; margin-left: 7px; font-size: 10.200px; white-space: nowrap; flex: 1; }
.mic { width: 8px; height: 13px; margin-right: 12px; flex: none; }
.slot { width: 32.300px; height: 27px; display: flex; align-items: center; justify-content: center; flex: none; }
.s34 { width: 34px; }
.s39 { width: 39px; }
.s38 { width: 38px; }
.current { background: #303033; }
.t16 { width: 15px; height: 13px; }
.t20 { width: 20px; height: 20px; }
.t18 { width: 17px; height: 17px; }
.eie { font: 700 25px/22px "Liberation Sans", sans-serif; color: #eee; }
.eedge { font: 700 28px/22px "Liberation Sans", sans-serif; color: #1f7fdc; }
.app-i { width: 17px; height: 17px; display: flex; align-items: center; justify-content: center; font: 700 9px/17px "Liberation Sans", sans-serif; color: #fff; border-radius: 1px; }
.app-i svg { width: 15px; height: 15px; }
.green { background: #6cc54a; border-radius: 50%; }
.excel { background: #1f7244; }
.one { background: #80397b; }
.outlook { background: #0f6cb6; }
.ppt { background: #d24726; }
.word { background: #2b579a; }
.bird { background: #eef4fb; }
.box { background: #f7f4e6; border-radius: 4px; }
.acad { background: #d12f2f; }
.tray { flex: 1; display: flex; align-items: center; height: 27px; padding-left: 8px; gap: 7px; color: #e5e5e5; }
.caret { width: 6px; height: 6px; border-left: 1px solid #ddd; border-top: 1px solid #ddd; transform: rotate(45deg); margin-top: 2px; flex: none; }
.t-dot { width: 11px; height: 11px; border-radius: 2px; flex: none; margin-top: 4px; }
.orange { background: #e2652c; }
.blue { background: #2a78d6; }
.white { background: #e5e5e5; }
.grey { background: #bdbdbd; }
.ying { font-size: 10px; color: #f0f0f0; margin-top: 4px; }
.clock { margin-left: 4px; font: 9.500px/1 "Noto Sans", sans-serif; color: #dedede; align-self: flex-end; margin-bottom: 1px; }
.notif { width: 12px; height: 12px; margin-left: 11px; flex: none; }

/* context menu (floating) */
.ctxmenu { position: absolute; left: 404px; top: 2px; width: 141px; background: #f1f1f1; padding: 0 2px 2px 1px; box-shadow: 0 0 2px rgba(0,0,0,.7); color: #3a3a3a; font-size: 9.100px; z-index: 5; }
.ci { height: 16.070px; display: flex; align-items: center; position: relative; white-space: nowrap; }
.ci-i { width: 14px; height: 14px; margin: 0 8px 0 3px; flex: none; display: block; }
.sub::after { content: ""; position: absolute; right: 9px; top: 6px; width: 4px; height: 4px; border-top: 1px solid #555; border-right: 1px solid #555; transform: rotate(45deg); }
.sep { height: 5.300px; display: flex; align-items: center; }
.sep::after { content: ""; display: block; height: 1px; background: #e2e2e2; flex: 1; margin: 0 3px; }
.hot { background: #93c9f5; }
.ring { position: absolute; left: 399px; top: 295px; width: 98px; height: 17px; border: 1px solid #cf3f6e; border-radius: 50%; z-index: 6; }

.appbtn { position: absolute; left: 2px; top: 1px; width: 28px; height: 31px; background: linear-gradient(#a39595, #7a6666); border: 1px solid #666; display: flex; align-items: center; justify-content: center; z-index: 4; padding: 1px 4px 1px 1px; }
.appbtn svg { width: 22px; height: 27px; flex: none; }
.appbtn i { position: absolute; right: 1px; top: 14px; width: 2px; height: 2px; background: #ddd; }

/* watermark */
.watermark { position: absolute; left: 765px; top: 462px; width: 180px; height: 84px; background: #1f2f58; display: flex; align-items: center; padding-left: 15px; z-index: 7; }
.wm-logo { width: 34px; height: 44px; flex: none; }
.wm-text { margin-left: 13px; }
.wm-cn { font-size: 25px; font-weight: 500; line-height: 30px; color: #c9cdd6; letter-spacing: 1.500px; white-space: nowrap; }
.wm-en { font: 10.500px/12px "Noto Sans", sans-serif; color: #a9aebd; letter-spacing: 1.550px; white-space: nowrap; margin-top: 3px; }
```
